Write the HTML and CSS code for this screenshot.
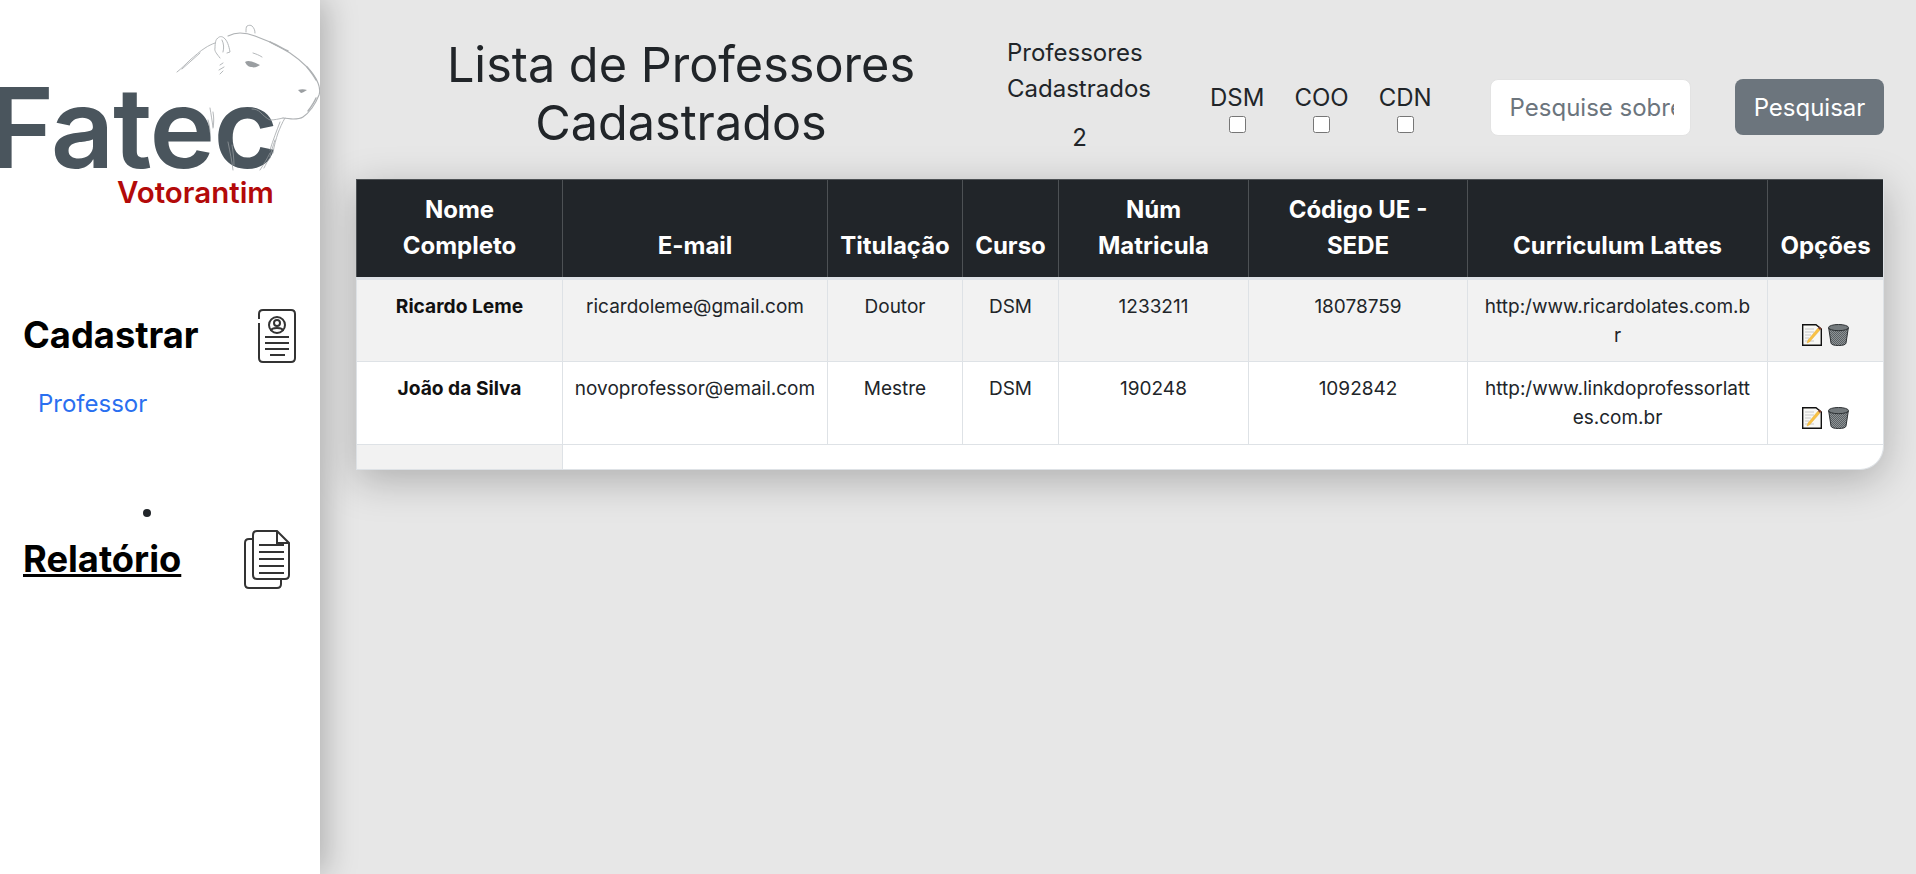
FILE: index.html
```html
<!DOCTYPE html>
<html lang="pt-br">
<head>
    <meta charset="UTF-8">
    <meta name="viewport" content="width=device-width, initial-scale=1.0">
    <title>Lista de Professores</title>
    <link rel="stylesheet" href="styles.css">
</head>
<body>

<!-- Menu lateral -->
<aside class="sidebar">
    <div class="logo">
        <span class="logo-fatec">Fatec</span>
        <span class="logo-cidade">Votorantim</span>
        <svg class="capivara" viewBox="0 0 150 160" aria-hidden="true">
            <g fill="none" stroke="#9a9ea1" stroke-width="0.9" stroke-linecap="round" opacity="0.8">
                <path d="M7 52C12 48 16 44 20 40C25 36 30 31 35 28C38 26 42 24 45 23"/>
                <path d="M12 49C18 44 24 38 30 33"/>
                <path d="M50 38C47 34 44 31 45 28C45 23 46 19 47 19C49 16 52 16 54 18C57 20 59 26 60 32L57 33"/>
                <path d="M52 20C54 24 54 28 53 32"/>
                <path d="M58 16C62 14 66 13 70 13C76 13 80 14 85 16C90 18 95 20 100 22C107 26 114 29 120 33C126 37 132 42 137 47C142 52 146 58 148 63C150 68 150 72 149 75C147 80 145 84 142 88C139 92 136 95 133 97C130 99 126 99 123 99C120 99 116 98 113 98" stroke-width="1.1"/>
                <path d="M100 22C107 25 112 28 118 31M137 47C141 52 144 56 146 60M146 78C144 83 141 87 138 91" stroke-width="1.4"/>
                <path d="M76 12C76 9 76 7 77 6C79 5 81 5 82 6C84 8 85 10 85 13"/>
                <path d="M83 33C86 34 89 35 92 37"/>
                <path d="M50 45L53 43M49 50L54 47M50 54L53 51"/>
                <path d="M82 89C85 89 88 90 90 92C93 95 96 98 100 100C104 100 109 99 113 98"/>
                <path d="M115 98C112 103 110 108 108 113C106 119 104 126 103 133"/>
                <path d="M110 102C107 110 103 120 100 130M105 120C103 126 101 132 100 137"/>
                <path d="M40 88C41 94 42 100 43 107M43 92C44 98 44 102 43 108M38 100C39 104 40 108 40 112"/>
                <path d="M58 122C60 132 62 141 63 150M62 125C63 132 64 138 64 145"/>
                <path d="M90 150C94 144 97 139 100 133M94 148C96 144 98 140 100 138"/>
            </g>
            <path class="olho" d="M75 42C78 40 82 41 90 45C87 47 84 48 82 47C79 47 77 46 75 42Z"/>
            <path class="olho" d="M128 70C131 69 134 69 137 70C134 72 132 73 131 73C130 72 129 71 128 70Z"/>
        </svg>
    </div>

    <nav class="menu">
        <div class="menu-titulo">
            <h2>Cadastrar</h2>
            <svg class="icone-ficha" viewBox="0 0 38 54" aria-hidden="true">
                <g fill="none" stroke="#333" stroke-width="2">
                    <path d="M1 10V5Q1 1 5 1H33Q37 1 37 5V49Q37 53 33 53H5Q1 53 1 49V14"/>
                    <circle cx="19" cy="16" r="8"/>
                    <circle cx="19" cy="14" r="3"/>
                    <path d="M13 22C13 18 25 18 25 22"/>
                    <path d="M7 28H31M7 34H31M7 40H31M12 46H27"/>
                </g>
            </svg>
        </div>
        <a class="menu-link" href="#">Professor</a>

        <ul class="menu-lista">
            <li></li>
        </ul>

        <div class="menu-titulo titulo-relatorio">
            <h2><a href="#">Relatório</a></h2>
            <svg class="icone-docs" viewBox="0 0 46 59" aria-hidden="true">
                <g fill="#fff" stroke="#333" stroke-width="2">
                    <path d="M9 9H5Q1 9 1 13V54Q1 58 5 58H33Q37 58 37 54V49"/>
                    <path d="M13 1H33L45 13V45Q45 49 41 49H13Q9 49 9 45V5Q9 1 13 1Z"/>
                    <path d="M33 1V13H45" fill="none"/>
                    <path d="M15 15H40M15 22H40M15 29H40M15 36H40M15 43H40" fill="none"/>
                </g>
            </svg>
        </div>
    </nav>
</aside>

<!-- Conteudo principal -->
<main class="conteudo">
    <header class="topo">
        <h1>Lista de Professores Cadastrados</h1>

        <div class="contador">
            <p>Professores<br>Cadastrados</p>
            <span>2</span>
        </div>

        <div class="filtros">
            <label>DSM<input type="checkbox"></label>
            <label>COO<input type="checkbox"></label>
            <label>CDN<input type="checkbox"></label>
        </div>

        <input class="busca" type="text" placeholder="Pesquise sobre">
        <button class="btn-pesquisar" type="button">Pesquisar</button>
    </header>

    <div class="tabela-box">
        <table>
            <colgroup>
                <col class="c1"><col class="c2"><col class="c3"><col class="c4">
                <col class="c5"><col class="c6"><col class="c7"><col class="c8">
            </colgroup>
            <thead>
                <tr>
                    <th>Nome Completo</th>
                    <th>E-mail</th>
                    <th>Titulação</th>
                    <th>Curso</th>
                    <th>Núm Matricula</th>
                    <th>Código UE - SEDE</th>
                    <th>Curriculum Lattes</th>
                    <th>Opções</th>
                </tr>
            </thead>
            <tbody>
                <tr class="zebra">
                    <td class="nome">Ricardo Leme</td>
                    <td>ricardoleme@gmail.com</td>
                    <td>Doutor</td>
                    <td>DSM</td>
                    <td>1233211</td>
                    <td>18078759</td>
                    <td class="link">http:/www.ricardolates.com.br</td>
                    <td class="opcoes">
                        <svg class="ic-editar" viewBox="0 0 20 22" aria-hidden="true"><use href="#editar"/></svg>
                        <svg class="ic-lixeira" viewBox="0 0 21 22" aria-hidden="true"><use href="#lixeira"/></svg>
                    </td>
                </tr>
                <tr>
                    <td class="nome">João da Silva</td>
                    <td>novoprofessor@email.com</td>
                    <td>Mestre</td>
                    <td>DSM</td>
                    <td>190248</td>
                    <td>1092842</td>
                    <td class="link">http:/www.linkdoprofessorlattes.com.br</td>
                    <td class="opcoes">
                        <svg class="ic-editar" viewBox="0 0 20 22" aria-hidden="true"><use href="#editar"/></svg>
                        <svg class="ic-lixeira" viewBox="0 0 21 22" aria-hidden="true"><use href="#lixeira"/></svg>
                    </td>
                </tr>
                <tr class="vazia">
                    <td></td>
                    <td colspan="7"></td>
                </tr>
            </tbody>
        </table>
    </div>
</main>

<!-- Icones usados nas linhas da tabela -->
<svg class="sprites" aria-hidden="true">
    <defs>
        <pattern id="tela" width="2" height="2" patternUnits="userSpaceOnUse">
            <rect width="2" height="2" fill="#8d9396"/>
            <rect width="1" height="1" fill="#5b6063"/>
            <rect x="1" y="1" width="1" height="1" fill="#5b6063"/>
        </pattern>
    </defs>
    <symbol id="editar" viewBox="0 0 20 22">
        <path d="M.7 .7H14L19.300 5V21.300H.7Z" fill="#f8f8f5" stroke="#111" stroke-width="1.4"/>
        <path d="M3 5H12M3 8H12M3 11H9M3 14H7M3 17H12" stroke="#c8c8c8" stroke-width="1"/>
        <path d="M6 16L16 4L18 6L7.500 18L5 19Z" fill="#f9c244" stroke="#e0a635" stroke-width=".4"/>
        <path d="M16 4L17.500 2.500L19.500 4.500L18 6Z" fill="#7c3b2c"/>
    </symbol>
    <symbol id="lixeira" viewBox="0 0 21 22">
        <path d="M.7 4L3 19Q3.500 21.500 10.500 21.500Q17.500 21.500 18 19L20.300 4Z" fill="url(#tela)" stroke="#2c3033"/>
        <ellipse cx="10.500" cy="3.600" rx="10" ry="3.100" fill="#747a7d" stroke="#2c3033"/>
    </symbol>
</svg>

</body>
</html>
```

FILE: styles.css
```css
/* Estilos Gerais */
* {
    box-sizing: border-box;
}

html, body {
    height: 100%;
}

body {
    margin: 0;
    display: flex;
    min-height: 874px;
    overflow: hidden;
    background-color: #e7e7e7;
    color: #212529;
    font-family: Inter, "Liberation Sans", sans-serif;
    font-size: 16px;
    line-height: 1.5;
}

.sprites {
    position: absolute;
    width: 0;
    height: 0;
}

/* Menu lateral */
.sidebar {
    flex: 0 0 320px;
    background: white;
    box-shadow: 5px 0 30px rgba(0, 0, 0, 0.25);
    position: relative;
    z-index: 1;
}

.logo {
    position: relative;
    height: 230px;
    overflow: hidden;
}

.capivara {
    position: absolute;
    left: 170px;
    top: 20px;
    width: 150px;
    height: 160px;
}

.olho {
    fill: #9a9ea1;
}

.logo-fatec {
    position: absolute;
    left: -11px;
    top: 72px;
    color: #4a555d;
    font-size: 111px;
    font-weight: 600;
    line-height: 1;
    letter-spacing: -1.5px;
}

.logo-cidade {
    position: absolute;
    left: 117px;
    top: 178px;
    color: #b30a0a;
    font-size: 29.5px;
    font-weight: 600;
    line-height: 1;
}

.menu {
    padding: 79px 23px 0;
}

.menu-titulo {
    display: flex;
    align-items: center;
    justify-content: space-between;
    padding-right: 1px;
}

.menu-titulo h2 {
    margin: 0;
    color: black;
    font-size: 36.3px;
    font-weight: 700;
    line-height: 1.2;
}

.menu-titulo a {
    color: black;
}

.icone-ficha {
    width: 38px;
    height: 54px;
}

.icone-docs {
    width: 46px;
    height: 59px;
    margin-right: 6px;
}

.menu-link {
    display: block;
    margin: 23px 0 0 15px;
    color: #2a6ff0;
    font-size: 24px;
    line-height: 36px;
    text-decoration: none;
}

.menu-lista {
    margin: 87px 0 0;
    padding: 0;
    height: 8px;
    list-style: none;
}

.menu-lista li {
    width: 8px;
    height: 8px;
    margin-left: 120px;
    border-radius: 50%;
    background-color: #212529;
}

.titulo-relatorio {
    margin-top: 13px;
}

/* Conteudo principal */
.conteudo {
    flex: 1;
    min-width: 0;
    padding: 30px 32px 0 36px;
}

.topo {
    display: flex;
    align-items: flex-start;
    height: 149px;
}

.topo h1 {
    flex: 0 0 530px;
    margin: 6px 0 0 60px;
    font-size: 48.6px;
    font-weight: 400;
    line-height: 1.2;
    text-align: center;
}

.contador {
    flex: 0 0 160px;
    margin-top: 5px;
    margin-left: 61px;
    font-size: 24px;
}

.contador p {
    margin: 0;
    line-height: 36px;
}

.contador span {
    display: block;
    margin-top: 13px;
    line-height: 36px;
    text-align: center;
    width: 145px;
}

.filtros {
    display: flex;
    gap: 30px;
    margin-top: 50px;
    margin-left: 43px;
}

.filtros label {
    display: flex;
    flex-direction: column;
    align-items: center;
    font-size: 24px;
    line-height: 36px;
}

.filtros input {
    width: 17px;
    height: 17px;
    margin: 0;
}

.busca {
    width: 201px;
    height: 57px;
    margin-left: 58px;
    margin-top: 49px;
    padding: 8px 16px 8px 19px;
    background: white;
    border: 1px solid #e3e3e3;
    border-radius: 8px;
    color: #212529;
    font-family: inherit;
    font-size: 24px;
}

.busca::placeholder {
    color: #6c757d;
}

.btn-pesquisar {
    margin-left: auto;
    margin-top: 49px;
    width: 149px;
    height: 56px;
    background-color: #6c757d;
    border: none;
    border-radius: 8px;
    color: white;
    font-family: inherit;
    font-size: 24px;
}

/* Tabela */
.tabela-box {
    width: 1528px;
    height: 291px;
    overflow: hidden;
    background: white;
    border-right: 1px solid #dee2e6;
    border-bottom: 1px solid #dee2e6;
    border-bottom-right-radius: 24px;
    box-shadow: 0 10px 40px rgba(0, 0, 0, 0.25);
}

table {
    width: 100%;
    border-collapse: collapse;
    table-layout: fixed;
}

.c1 { width: 206px; }
.c2 { width: 265px; }
.c3 { width: 135px; }
.c4 { width: 96px; }
.c5 { width: 190px; }
.c6 { width: 219px; }
.c7 { width: 300px; }
.c8 { width: 116px; }

th {
    height: 99px;
    padding: 8px 12px 13px;
    background-color: #212529;
    border: 1px solid #4d5154;
    border-bottom: 3px solid #dee2e6;
    color: white;
    font-size: 24px;
    font-weight: 700;
    line-height: 36px;
    text-align: center;
    vertical-align: bottom;
}

td {
    height: 83px;
    padding: 12px 8px 8px;
    border: 1px solid #dee2e6;
    font-size: 19px;
    line-height: 29px;
    text-align: center;
    vertical-align: top;
    overflow-wrap: anywhere;
}

tr.zebra td {
    background-color: #f2f2f2;
}

td.nome {
    color: #111;
    font-size: 19.2px;
    font-weight: 700;
}

td.link {
    padding-left: 15px;
    padding-right: 15px;
}

td.opcoes {
    padding-bottom: 15px;
    vertical-align: bottom;
    white-space: nowrap;
    font-size: 0;
    line-height: 0;
}

td.opcoes svg {
    height: 22px;
}

.ic-editar {
    width: 20px;
    margin-right: 6px;
}

.ic-lixeira {
    width: 21px;
}

tr.vazia td {
    height: 25px;
    padding: 0;
}

tr.vazia td:first-child {
    background-color: #f2f2f2;
}
```
